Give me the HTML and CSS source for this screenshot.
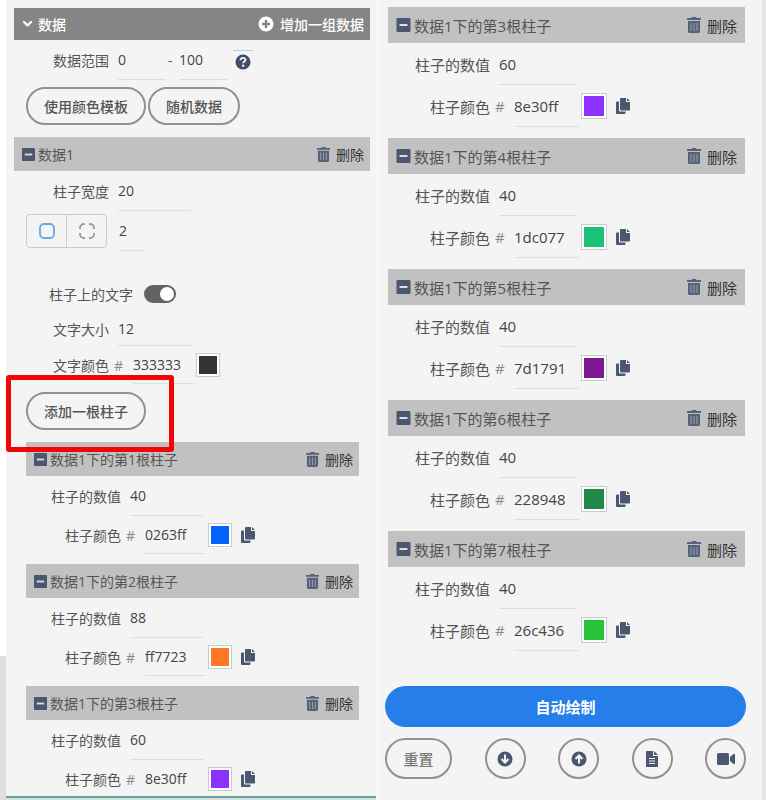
FILE: index.html
```
<!DOCTYPE html>
<html lang="zh-CN">
<head>
    <meta charset="UTF-8">
    <meta name="viewport" content="width=device-width, initial-scale=1.0">
    <title>柱状图数据</title>
    <link rel="stylesheet" href="styles.css">
</head>
<body>
    <!-- Icons -->
    <svg class="sprite" aria-hidden="true">
        <symbol id="minus" viewBox="0 0 14 14">
            <rect width="14" height="14" rx="1" fill="currentColor"/>
            <rect x="3" y="6" width="8" height="2" fill="#ddd"/>
        </symbol>
        <symbol id="trash" viewBox="0 0 14 16">
            <path fill="currentColor" d="M5 0h4l.7 1H14v2H0V1h4.3zM1 4h12v10.500a1.500 1.500 0 0 1-1.500 1.500h-9A1.500 1.500 0 0 1 1 14.500z"/>
            <path d="M4 6v8M7 6v8M10 6v8" stroke="#a4a9b2" stroke-width=".9"/>
        </symbol>
        <symbol id="copy" viewBox="0 0 14 16">
            <path fill="currentColor" d="M5 0h5v4h4v7.500a1 1 0 0 1-1 1H5a1 1 0 0 1-1-1V1a1 1 0 0 1 1-1zM11 0l3 3h-3zM1 3.500h2v9a1 1 0 0 0 1 1h5.500V15a1 1 0 0 1-1 1H1a1 1 0 0 1-1-1V4.500a1 1 0 0 1 1-1z"/>
        </symbol>
        <symbol id="chevron" viewBox="0 0 10 8">
            <path d="M1.500 2l3.500 3.500L8.500 2" fill="none" stroke="currentColor" stroke-width="2.400" stroke-linecap="round" stroke-linejoin="round"/>
        </symbol>
        <symbol id="plus" viewBox="0 0 16 16">
            <circle cx="8" cy="8" r="7.500" fill="currentColor"/>
            <path d="M8 4v8M4 8h8" stroke="#858585" stroke-width="2.400"/>
        </symbol>
        <symbol id="help" viewBox="0 0 16 16">
            <circle cx="8" cy="8" r="7.500" fill="currentColor"/>
            <path d="M5.500 6.200C5.600 3 10.600 3.200 10.500 6c0 1.600-2.400 1.500-2.400 3.200" fill="none" stroke="#f4f4f4" stroke-width="1.900"/>
            <circle cx="8.100" cy="11.700" r="1.200" fill="#f4f4f4"/>
        </symbol>
        <symbol id="solid" viewBox="0 0 16 16">
            <rect x="1" y="1" width="14" height="14" rx="4" fill="none" stroke="currentColor" stroke-width="1.800"/>
        </symbol>
        <symbol id="dashed" viewBox="0 0 16 16">
            <path d="M6 1H5a4 4 0 0 0-4 4v1M10 1h1a4 4 0 0 1 4 4v1M15 10v1a4 4 0 0 1-4 4h-1M6 15H5a4 4 0 0 1-4-4v-1" fill="none" stroke="currentColor" stroke-width="1.800"/>
        </symbol>
        <symbol id="down" viewBox="0 0 16 16">
            <circle cx="8" cy="8" r="7.500" fill="currentColor"/>
            <path d="M8 3.500v8M4.500 8L8 11.500 11.500 8" fill="none" stroke="#f4f4f4" stroke-width="2"/>
        </symbol>
        <symbol id="up" viewBox="0 0 16 16">
            <circle cx="8" cy="8" r="7.500" fill="currentColor"/>
            <path d="M8 12.500v-8M4.500 8L8 4.500 11.500 8" fill="none" stroke="#f4f4f4" stroke-width="2"/>
        </symbol>
        <symbol id="file" viewBox="0 0 12 16">
            <path fill="currentColor" d="M1 0h6v5h5v10a1 1 0 0 1-1 1H1a1 1 0 0 1-1-1V1a1 1 0 0 1 1-1zM8 0l4 4H8z"/>
            <path d="M3 7.500h6M3 10h6M3 12.500h6" stroke="#f4f4f4"/>
        </symbol>
        <symbol id="video" viewBox="0 0 18 12">
            <rect width="12" height="12" rx="1.500" fill="currentColor"/>
            <path fill="currentColor" d="M13 4l3.500-3q1.500-.8 1.500.8v8.400q0 1.600-1.500.8L13 8z"/>
        </symbol>
    </svg>

    <main class="editor">
        <section class="panel panel-left">
            <header class="bar bar-main">
                <svg class="icon-chevron"><use href="#chevron"/></svg>
                <h2 class="bar-title">数据</h2>
                <button type="button" class="bar-action"><svg class="icon"><use href="#plus"/></svg>增加一组数据</button>
            </header>
            <div class="row">
                <label class="label" for="range-min">数据范围</label>
                <input class="field field-range" id="range-min" type="text" value="0">
                <span class="dash">-</span>
                <input class="field field-range" type="text" value="100" aria-label="最大值">
                <button type="button" class="help" aria-label="帮助"><svg class="icon"><use href="#help"/></svg></button>
            </div>
            <div class="actions">
                <button type="button" class="pill">使用颜色模板</button>
                <button type="button" class="pill">随机数据</button>
            </div>

            <header class="bar">
                <svg class="icon-minus"><use href="#minus"/></svg>
                <h3 class="bar-title">数据1</h3>
                <button type="button" class="bar-action"><svg class="icon-trash"><use href="#trash"/></svg>删除</button>
            </header>
            <div class="row">
                <label class="label" for="bar-width">柱子宽度</label>
                <input class="field" id="bar-width" type="text" value="20">
            </div>
            <div class="row row-shape">
                <div class="segment">
                    <button type="button" class="segment-btn active" aria-label="实线"><svg class="icon"><use href="#solid"/></svg></button>
                    <button type="button" class="segment-btn" aria-label="虚线"><svg class="icon"><use href="#dashed"/></svg></button>
                </div>
                <input class="field field-small" type="text" value="2" aria-label="线宽">
            </div>
            <div class="row row-toggle">
                <label class="label label-wide" for="show-text">柱子上的文字</label>
                <input class="toggle" id="show-text" type="checkbox" checked>
            </div>
            <div class="row row-size">
                <label class="label" for="text-size">文字大小</label>
                <input class="field" id="text-size" type="text" value="12">
            </div>
            <div class="row row-color">
                <label class="label" for="text-color">文字颜色</label>
                <span class="hash">#</span>
                <input class="field field-hex" id="text-color" type="text" value="333333">
                <input class="swatch" type="color" value="#333333" aria-label="选择颜色">
            </div>
            <div class="actions actions-add">
                <button type="button" class="pill">添加一根柱子</button>
                <span class="highlight"></span>
            </div>

            <div class="cards">
                <article class="card">
                    <header class="bar">
                        <svg class="icon-minus"><use href="#minus"/></svg>
                        <h4 class="bar-title">数据1下的第1根柱子</h4>
                        <button type="button" class="bar-action"><svg class="icon-trash"><use href="#trash"/></svg>删除</button>
                    </header>
                    <div class="row">
                        <label class="label" for="value-1">柱子的数值</label>
                        <input class="field" id="value-1" type="text" value="40">
                    </div>
                    <div class="row row-color">
                        <label class="label" for="color-1">柱子颜色</label>
                        <span class="hash">#</span>
                        <input class="field field-hex" id="color-1" type="text" value="0263ff">
                        <input class="swatch" type="color" value="#0263ff" aria-label="选择颜色">
                        <button type="button" class="copy" aria-label="复制"><svg class="icon-copy"><use href="#copy"/></svg></button>
                    </div>
                </article>
                <article class="card">
                    <header class="bar">
                        <svg class="icon-minus"><use href="#minus"/></svg>
                        <h4 class="bar-title">数据1下的第2根柱子</h4>
                        <button type="button" class="bar-action"><svg class="icon-trash"><use href="#trash"/></svg>删除</button>
                    </header>
                    <div class="row">
                        <label class="label" for="value-2">柱子的数值</label>
                        <input class="field" id="value-2" type="text" value="88">
                    </div>
                    <div class="row row-color">
                        <label class="label" for="color-2">柱子颜色</label>
                        <span class="hash">#</span>
                        <input class="field field-hex" id="color-2" type="text" value="ff7723">
                        <input class="swatch" type="color" value="#ff7723" aria-label="选择颜色">
                        <button type="button" class="copy" aria-label="复制"><svg class="icon-copy"><use href="#copy"/></svg></button>
                    </div>
                </article>
                <article class="card">
                    <header class="bar">
                        <svg class="icon-minus"><use href="#minus"/></svg>
                        <h4 class="bar-title">数据1下的第3根柱子</h4>
                        <button type="button" class="bar-action"><svg class="icon-trash"><use href="#trash"/></svg>删除</button>
                    </header>
                    <div class="row">
                        <label class="label" for="value-3">柱子的数值</label>
                        <input class="field" id="value-3" type="text" value="60">
                    </div>
                    <div class="row row-color">
                        <label class="label" for="color-3">柱子颜色</label>
                        <span class="hash">#</span>
                        <input class="field field-hex" id="color-3" type="text" value="8e30ff">
                        <input class="swatch" type="color" value="#8e30ff" aria-label="选择颜色">
                        <button type="button" class="copy" aria-label="复制"><svg class="icon-copy"><use href="#copy"/></svg></button>
                    </div>
                </article>
            </div>
        </section>

        <section class="panel panel-right">
            <div class="cards">
                <article class="card">
                    <header class="bar">
                        <svg class="icon-minus"><use href="#minus"/></svg>
                        <h4 class="bar-title">数据1下的第3根柱子</h4>
                        <button type="button" class="bar-action"><svg class="icon-trash"><use href="#trash"/></svg>删除</button>
                    </header>
                    <div class="row">
                        <label class="label" for="value-3b">柱子的数值</label>
                        <input class="field" id="value-3b" type="text" value="60">
                    </div>
                    <div class="row row-color">
                        <label class="label" for="color-3b">柱子颜色</label>
                        <span class="hash">#</span>
                        <input class="field field-hex" id="color-3b" type="text" value="8e30ff">
                        <input class="swatch" type="color" value="#8e30ff" aria-label="选择颜色">
                        <button type="button" class="copy" aria-label="复制"><svg class="icon-copy"><use href="#copy"/></svg></button>
                    </div>
                </article>
                <article class="card">
                    <header class="bar">
                        <svg class="icon-minus"><use href="#minus"/></svg>
                        <h4 class="bar-title">数据1下的第4根柱子</h4>
                        <button type="button" class="bar-action"><svg class="icon-trash"><use href="#trash"/></svg>删除</button>
                    </header>
                    <div class="row">
                        <label class="label" for="value-4">柱子的数值</label>
                        <input class="field" id="value-4" type="text" value="40">
                    </div>
                    <div class="row row-color">
                        <label class="label" for="color-4">柱子颜色</label>
                        <span class="hash">#</span>
                        <input class="field field-hex" id="color-4" type="text" value="1dc077">
                        <input class="swatch" type="color" value="#1dc077" aria-label="选择颜色">
                        <button type="button" class="copy" aria-label="复制"><svg class="icon-copy"><use href="#copy"/></svg></button>
                    </div>
                </article>
                <article class="card">
                    <header class="bar">
                        <svg class="icon-minus"><use href="#minus"/></svg>
                        <h4 class="bar-title">数据1下的第5根柱子</h4>
                        <button type="button" class="bar-action"><svg class="icon-trash"><use href="#trash"/></svg>删除</button>
                    </header>
                    <div class="row">
                        <label class="label" for="value-5">柱子的数值</label>
                        <input class="field" id="value-5" type="text" value="40">
                    </div>
                    <div class="row row-color">
                        <label class="label" for="color-5">柱子颜色</label>
                        <span class="hash">#</span>
                        <input class="field field-hex" id="color-5" type="text" value="7d1791">
                        <input class="swatch" type="color" value="#7d1791" aria-label="选择颜色">
                        <button type="button" class="copy" aria-label="复制"><svg class="icon-copy"><use href="#copy"/></svg></button>
                    </div>
                </article>
                <article class="card">
                    <header class="bar">
                        <svg class="icon-minus"><use href="#minus"/></svg>
                        <h4 class="bar-title">数据1下的第6根柱子</h4>
                        <button type="button" class="bar-action"><svg class="icon-trash"><use href="#trash"/></svg>删除</button>
                    </header>
                    <div class="row">
                        <label class="label" for="value-6">柱子的数值</label>
                        <input class="field" id="value-6" type="text" value="40">
                    </div>
                    <div class="row row-color">
                        <label class="label" for="color-6">柱子颜色</label>
                        <span class="hash">#</span>
                        <input class="field field-hex" id="color-6" type="text" value="228948">
                        <input class="swatch" type="color" value="#228948" aria-label="选择颜色">
                        <button type="button" class="copy" aria-label="复制"><svg class="icon-copy"><use href="#copy"/></svg></button>
                    </div>
                </article>
                <article class="card">
                    <header class="bar">
                        <svg class="icon-minus"><use href="#minus"/></svg>
                        <h4 class="bar-title">数据1下的第7根柱子</h4>
                        <button type="button" class="bar-action"><svg class="icon-trash"><use href="#trash"/></svg>删除</button>
                    </header>
                    <div class="row">
                        <label class="label" for="value-7">柱子的数值</label>
                        <input class="field" id="value-7" type="text" value="40">
                    </div>
                    <div class="row row-color">
                        <label class="label" for="color-7">柱子颜色</label>
                        <span class="hash">#</span>
                        <input class="field field-hex" id="color-7" type="text" value="26c436">
                        <input class="swatch" type="color" value="#26c436" aria-label="选择颜色">
                        <button type="button" class="copy" aria-label="复制"><svg class="icon-copy"><use href="#copy"/></svg></button>
                    </div>
                </article>
            </div>

            <footer class="footer">
                <button type="button" class="draw">自动绘制</button>
                <div class="tools">
                    <button type="button" class="tool tool-reset">重置</button>
                    <button type="button" class="tool" aria-label="下载"><svg class="icon"><use href="#down"/></svg></button>
                    <button type="button" class="tool" aria-label="上传"><svg class="icon"><use href="#up"/></svg></button>
                    <button type="button" class="tool" aria-label="文件"><svg class="icon-file"><use href="#file"/></svg></button>
                    <button type="button" class="tool" aria-label="视频"><svg class="icon-video"><use href="#video"/></svg></button>
                </div>
            </footer>
        </section>
    </main>
</body>
</html>
```
FILE: styles.css
```
* {
    margin: 0;
    padding: 0;
    box-sizing: border-box;
}

body {
    font-family: "Open Sans", "Noto Sans CJK SC", sans-serif;
    font-size: 14px;
    color: #555;
    background: linear-gradient(#fff 82%, #dedede 82%);
}

button,
input {
    font: inherit;
    color: inherit;
    background: none;
    border: none;
    border-radius: 0;
    outline: none;
}

button {
    cursor: pointer;
}

svg {
    display: block;
    flex: none;
}

.sprite {
    position: absolute;
    width: 0;
    height: 0;
}

/* Two columns of settings */
.editor {
    display: grid;
    grid-template-columns: 370fr 390fr;
    height: 100vh;
    padding-left: 6px;
    overflow: hidden;
}

.panel {
    --label: 95px;
    --field: 73px;
    --hex: 61px;
    --row: 40px;
    --row-color: 38px;
    --swatch: 24px;
    background: #f4f4f4;
    min-width: 0;
    min-height: 0;
    overflow: hidden;
}

.panel-left {
    padding: 8px 6px 0 8px;
    border-bottom: 2px solid #63a5a3;
    margin-bottom: 2px;
}

.panel-right {
    --label: 102px;
    --field: 77px;
    --hex: 65px;
    --row: 42px;
    --row-color: 42px;
    --swatch: 26px;
    display: flex;
    flex-direction: column;
    font-size: 15px;
    padding: 7px 17px 0 10px;
    border-left: 2px solid #f7f7f7;
    border-right: 4px solid #e6e6e6;
}

/* Title bars */
.bar {
    display: flex;
    align-items: center;
    height: 34px;
    padding: 0 6px 0 8px;
    background: #c1c1c1;
}

.bar-title {
    flex: 1;
    margin-left: 3px;
    font-size: inherit;
    font-weight: 400;
    white-space: nowrap;
}

.bar-action {
    display: flex;
    align-items: center;
    gap: 6px;
    color: #333;
    white-space: nowrap;
}

.bar-main {
    height: 32px;
    background: #858585;
    color: #fff;
}

.bar-main .bar-title,
.bar-main .bar-action {
    color: #fff;
    font-weight: 500;
}

.bar-main .bar-title {
    margin-left: 5px;
}

.icon {
    width: 16px;
    height: 16px;
}

.icon-chevron {
    width: 11px;
    height: 8px;
}

.icon-minus {
    width: 13px;
    height: 13px;
    color: #4b566f;
}

.icon-trash {
    width: 13px;
    height: 15px;
    color: #56627a;
}

.icon-copy {
    width: 14px;
    height: 16px;
}

.icon-file {
    width: 12px;
    height: 16px;
}

.icon-video {
    width: 18px;
    height: 12px;
}

/* Form rows */
.row {
    display: flex;
    align-items: center;
    height: var(--row);
    white-space: nowrap;
}

.row-color {
    height: var(--row-color);
}

.label {
    flex: none;
    width: var(--label);
    margin-right: 9px;
    text-align: right;
}

.label-wide {
    width: 119px;
    margin-right: 11px;
}

.field {
    width: var(--field);
    height: 100%;
    border-bottom: 1px solid #dedede;
    color: #444;
}

.field:focus {
    border-bottom-color: #409eff;
}

.field-range {
    width: 48px;
}

.field-small {
    width: 25px;
}

.field-hex {
    width: var(--hex);
}

.dash {
    width: 13px;
    padding-left: 2px;
}

.hash {
    width: 19px;
    margin-left: -4px;
    color: #888;
}

.help {
    margin-left: 6px;
    padding: 3px 2px 0;
    border-top: 1px solid #b5cbe8;
    color: #424c6b;
}

.swatch {
    width: var(--swatch);
    height: var(--swatch);
    margin-left: 2px;
    border: 1px solid #c5cdd2;
    background: #fff;
    appearance: none;
    cursor: pointer;
}

.swatch::-webkit-color-swatch-wrapper {
    padding: 2px;
}

.swatch::-webkit-color-swatch {
    border: none;
    border-radius: 0;
}

.copy {
    margin-left: 9px;
    color: #4b566f;
}

.row-shape {
    padding-left: 12px;
}

.segment {
    display: flex;
    width: 81px;
    height: 34px;
    margin-right: 12px;
    border: 1px solid #ccc;
    border-radius: 4px;
}

.segment-btn {
    display: flex;
    flex: 1;
    align-items: center;
    justify-content: center;
    color: #999;
}

.segment-btn.active {
    border-right: 1px solid #ccc;
    color: #64a8e4;
}

.row-toggle {
    height: 36px;
    margin-top: 25px;
}

.row-size {
    height: 34px;
}

.toggle {
    display: flex;
    align-items: center;
    width: 32px;
    height: 18px;
    padding: 2px;
    border-radius: 9px;
    background: #aaa;
    appearance: none;
    cursor: pointer;
}

.toggle::before {
    content: "";
    width: 14px;
    height: 14px;
    border-radius: 50%;
    background: #fff;
}

.toggle:checked {
    justify-content: flex-end;
    background: #636363;
}

/* Buttons */
.actions {
    position: relative;
    display: flex;
    gap: 2px;
    padding: 7px 0 12px 12px;
}

.actions-add {
    padding-top: 8px;
}

.pill {
    height: 38px;
    padding: 0 16px;
    border: 2px solid #919191;
    border-radius: 19px;
    color: #555;
    font-weight: 500;
    white-space: nowrap;
}

.highlight {
    position: absolute;
    top: -9px;
    left: -8px;
    width: 168px;
    height: 77px;
    border: 5px solid #f40505;
    border-radius: 3px;
    pointer-events: none;
}

/* Bar cards */
.card {
    margin-bottom: 10px;
}

.panel-left .cards {
    padding: 0 11px 0 12px;
}

.panel-right .card {
    margin-bottom: 11px;
}

.panel-right .bar {
    height: 36px;
    padding-right: 8px;
}

.panel-right .icon-minus {
    width: 15px;
    height: 14px;
}

.panel-right .icon-trash {
    width: 14px;
    height: 16px;
}

/* Bottom buttons */
.footer {
    margin: auto -1px 21px -3px;
}

.draw {
    display: block;
    width: 100%;
    height: 41px;
    border-radius: 21px;
    background: #257eea;
    color: #fff;
    font-weight: 700;
}

.tools {
    display: flex;
    justify-content: space-between;
    margin-top: 11px;
}

.tool {
    display: flex;
    align-items: center;
    justify-content: center;
    width: 41px;
    height: 41px;
    border: 2px solid #919191;
    border-radius: 21px;
    color: #4b566f;
}

.tool-reset {
    width: 67px;
    color: #777;
    font-weight: 500;
}
```
